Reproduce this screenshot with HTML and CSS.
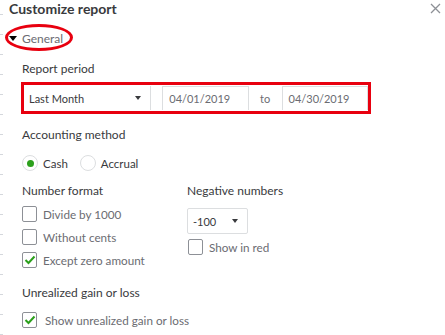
FILE: index.html
```html
<!DOCTYPE html>
<html lang="en">

<head>
    <meta charset="UTF-8">
    <meta name="viewport" content="width=device-width, initial-scale=1.0">
    <title>Customize report</title>
    <link rel="stylesheet" href="styles.css">
</head>

<body>
    <div class="panel">
        <div class="panel-head">
            <h1 class="panel-title">Customize report</h1>
            <button class="close-btn" aria-label="Close">
                <svg width="11" height="11" viewBox="0 0 11 11">
                    <path d="M1 1 L10 10 M10 1 L1 10" stroke="#8d9096" stroke-width="1.3" fill="none" />
                </svg>
            </button>
        </div>

        <div class="section-toggle">
            <span class="caret"></span>
            <span class="section-name">General</span>
            <span class="ring"></span>
        </div>

        <div class="section-body">
            <div class="field-label">Report period</div>
            <div class="period-row">
                <div class="select period-select">
                    <span>Last Month</span>
                    <span class="arrow"></span>
                </div>
                <div class="input date-input">04/01/2019</div>
                <div class="to">to</div>
                <div class="input date-input">04/30/2019</div>
            </div>

            <div class="field-label accounting">Accounting method</div>
            <div class="radio-row">
                <label class="radio"><span class="radio-dot checked"></span>Cash</label>
                <label class="radio"><span class="radio-dot"></span>Accrual</label>
            </div>

            <div class="columns">
                <div class="col col-format">
                    <div class="field-label">Number format</div>
                    <label class="check"><span class="box"></span>Divide by 1000</label>
                    <label class="check"><span class="box"></span>Without cents</label>
                    <label class="check"><span class="box checked"><svg width="12" height="10" viewBox="0 0 12 10"><path d="M1.5 5 L4.5 8 L10.5 1.5" stroke="#2ca01c" stroke-width="2" fill="none" /></svg></span>Except zero amount</label>
                </div>
                <div class="col col-negative">
                    <div class="field-label">Negative numbers</div>
                    <div class="select neg-select">
                        <span>-100</span>
                        <span class="arrow"></span>
                    </div>
                    <label class="check"><span class="box"></span>Show in red</label>
                </div>
            </div>

            <div class="field-label unrealized">Unrealized gain or loss</div>
            <label class="check last"><span class="box checked"><svg width="12" height="10" viewBox="0 0 12 10"><path d="M1.5 5 L4.5 8 L10.5 1.5" stroke="#2ca01c" stroke-width="2" fill="none" /></svg></span>Show unrealized gain or loss</label>
        </div>
    </div>
</body>

</html>
```

FILE: styles.css
```css
body {
    margin: 0;
    padding: 0;
    background-color: #fff;
    background-image: repeating-linear-gradient(to bottom, transparent 0, transparent 14px, #d4d7dc 14px, #d4d7dc 15px, transparent 15px, transparent 20px);
    background-size: 3px 100%;
    background-repeat: no-repeat;
    font-family: "Lato", "Open Sans", sans-serif;
    color: #393a3d;
    font-size: 12px;
}

.panel {
    width: 445px;
    height: 335px;
    overflow: hidden;
}

.panel-head {
    display: flex;
    justify-content: space-between;
    align-items: flex-start;
    padding: 0 4px 0 9px;
}

.panel-title {
    margin: 0;
    font-size: 14px;
    font-weight: bold;
    line-height: 17px;
    color: #393a3d;
}

.close-btn {
    border: 0;
    background: none;
    padding: 0;
    margin-top: 3px;
    width: 11px;
    height: 11px;
    display: flex;
}

.section-toggle {
    position: relative;
    display: flex;
    align-items: center;
    margin-top: 13px;
    padding-left: 9px;
    height: 16px;
}

.caret {
    width: 0;
    height: 0;
    border-left: 4px solid transparent;
    border-right: 4px solid transparent;
    border-top: 5px solid #000;
    margin-right: 5px;
}

.section-name {
    color: #6b6c72;
    font-size: 12px;
}

/* red annotation ellipse */
.ring {
    position: absolute;
    left: 5px;
    top: -6px;
    width: 62px;
    height: 21px;
    border: 3px solid #e8000f;
    border-radius: 50%;
}

.section-body {
    padding-left: 22px;
}

.field-label {
    font-size: 12px;
    line-height: 16px;
    color: #393a3d;
}

.section-body > .field-label:first-child {
    margin-top: 15px;
}

.period-row {
    display: flex;
    align-items: center;
    width: 344px;
    height: 26px;
    margin-top: 5px;
    padding: 0;
    border: 3px solid #e8000f;
    margin-left: -1px;
}

.select,
.input {
    box-sizing: border-box;
    height: 24px;
    border: 1px solid #dcdee0;
    background: #fff;
    display: flex;
    align-items: center;
    color: #393a3d;
    font-size: 11px;
}

.period-select {
    width: 128px;
    padding: 0 9px 0 5px;
    justify-content: space-between;
    border-left: 0;
    border-top: 0;
    border-bottom: 0;
    margin-right: 11px;
}

.arrow {
    width: 0;
    height: 0;
    border-left: 3.5px solid transparent;
    border-right: 3.5px solid transparent;
    border-top: 4px solid #393a3d;
}

.date-input {
    width: 87px;
    padding-left: 6px;
    color: #6b6c72;
    border-bottom: 0;
}

.to {
    width: 33px;
    text-align: center;
    color: #6b6c72;
    font-size: 11px;
}

.accounting {
    margin-top: 13px;
}

.radio-row {
    display: flex;
    align-items: center;
    gap: 12px;
    margin-top: 12px;
}

.radio {
    display: flex;
    align-items: center;
    font-size: 11.5px;
    color: #393a3d;
}

.radio-dot {
    box-sizing: border-box;
    width: 16px;
    height: 16px;
    border: 1px solid #dcdee0;
    border-radius: 50%;
    margin-right: 5px;
    display: flex;
    align-items: center;
    justify-content: center;
}

.radio-dot.checked::after {
    content: "";
    width: 7px;
    height: 7px;
    border-radius: 50%;
    background: #2ca01c;
}

.columns {
    display: flex;
    margin-top: 12px;
}

.col-format {
    width: 165px;
}

.check {
    display: flex;
    align-items: center;
    height: 16px;
    margin-top: 7px;
    color: #6b6c72;
    font-size: 11.7px;
}

.col-format .field-label + .check {
    margin-top: 7px;
}

.box {
    box-sizing: border-box;
    width: 15px;
    height: 16px;
    border: 1px solid #8d9096;
    border-radius: 2px;
    margin-right: 6px;
    display: flex;
    align-items: center;
    justify-content: center;
}

.neg-select {
    width: 61px;
    height: 26px;
    margin-top: 9px;
    padding: 0 9px 0 5px;
    justify-content: space-between;
    border-radius: 2px;
}

.col-negative .check {
    margin-top: 5px;
    margin-left: 1px;
}

.unrealized {
    margin-top: 17px;
}

.check.last {
    margin-top: 11px;
}

.check.last .box {
    margin-right: 8px;
}
```
